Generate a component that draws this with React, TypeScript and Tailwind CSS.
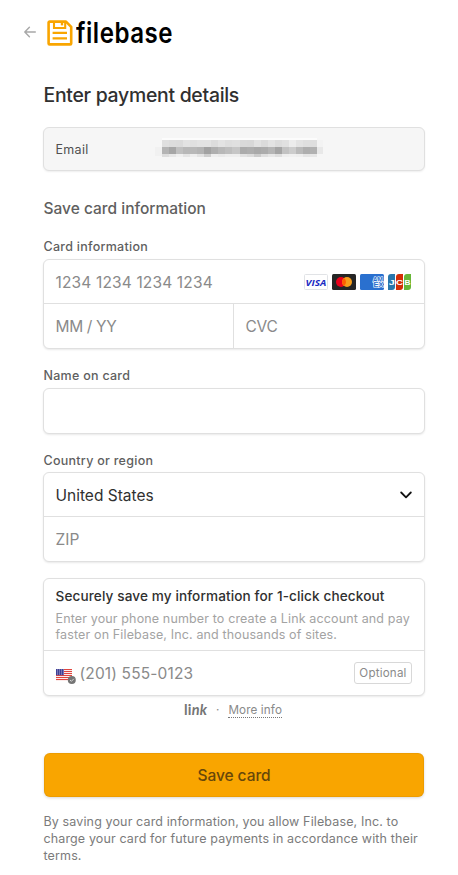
import React from "react";

const PIX_TOP = ["#dfdfdf","#dcdcdc","#dbdbdb","#e3e3e3","#e0e0e0","#e3e3e3","#e3e3e3","#dcdcdc","#e3e3e3","#dedede","#e0e0e0","#d9d9d9","#d8d8d8","#e2e2e2","#dbdbdb","#e3e3e3","#dcdcdc","#e0e0e0","#ececec","#e3e3e3","#dfdfdf","#dedede"];
const PIX_MID = ["#b4b4b4","#a6a6a6","#c0c0c0","#b8b8b8","#b8b8b8","#b4b4b4","#a2a2a2","#afafaf","#b8b8b8","#bebebe","#c6c6c6","#ababab","#aeaeae","#a9a9a9","#acacac","#b5b5b5","#a4a4a4","#c2c2c2","#cccccc","#bababa","#aeaeae","#b1b1b1"];
const PIX_LOW = ["#dddddd","#e7e7e7","#f0f0f0","#e5e5e5","#eeeeee","#e3e3e3","#cfcfcf","#eeeeee","#eaeaea","#eeeeee","#eeeeee","#e2e2e2","#dcdcdc","#cccccc","#dfdfdf","#e7e7e7","#dfdfdf","#eeeeee","#f0f0f0","#eeeeee","#e5e5e5","#e7e7e7"];

function PixelRow({ colors, className }: { colors: string[]; className: string }) {
  return (
    <div className={`flex ${className}`}>
      {colors.map((c, i) => (
        <span key={i} className="flex-1" style={{ backgroundColor: c }} />
      ))}
    </div>
  );
}

function RedactedEmail() {
  return (
    <div className="-mt-[3px] flex h-[19px] items-start">
      <div className="mt-[9px] h-[9px] w-[7px] bg-[#f1f1f1]" />
      <div className="w-[155px]">
        <div className="h-[2px] bg-[#fcfcfc]" />
        <PixelRow colors={PIX_TOP} className="h-[7px]" />
        <PixelRow colors={PIX_MID} className="h-[7px]" />
        <PixelRow colors={PIX_LOW} className="h-[3px]" />
      </div>
      <div className="mt-[2px] w-[6px]">
        <div className="h-[7px] bg-[#f3f3f3]" />
        <div className="h-[7px] bg-[#e8e8e8]" />
      </div>
    </div>
  );
}

function FilebaseMark() {
  return (
    <svg width="26" height="26" viewBox="0 0 26 26" fill="none" stroke="#f9a500">
      <path d="M2.6 1.6H19L24.2 6.8V23.4a1 1 0 0 1-1 1H2.6a1 1 0 0 1-1-1V2.6a1 1 0 0 1 1-1Z" strokeWidth="2.6" strokeLinejoin="round" />
      <path d="M7 2V8H18.2V2" strokeWidth="2.1" />
      <path d="M15 2.2V5.4" strokeWidth="2.4" />
      <path d="M5.6 12.9H20M5.6 18.4H20" strokeWidth="2.2" />
    </svg>
  );
}

function Cards() {
  return (
    <div className="flex gap-1">
      <svg width="24" height="16" viewBox="0 0 24 16">
        <rect x=".5" y=".5" width="23" height="15" rx="1" fill="#fff" stroke="#e1e3e6" />
        <text x="1.6" y="11.5" fontFamily="Open Sans" fontSize="9.6" fontWeight="700" fontStyle="italic" fill="#1a2bc3" textLength="20.6" lengthAdjust="spacingAndGlyphs">VISA</text>
      </svg>
      <svg width="24" height="16" viewBox="0 0 24 16">
        <rect width="24" height="16" rx="1.5" fill="#252525" />
        <circle cx="9" cy="8" r="5" fill="#eb001b" />
        <circle cx="15" cy="8" r="5" fill="#f79e1b" />
        <path d="M12 4a5 5 0 0 1 0 8a5 5 0 0 1 0-8" fill="#ff5f00" />
      </svg>
      <svg width="24" height="16" viewBox="0 0 24 16">
        <rect width="24" height="16" rx="1.5" fill="#2a70cf" />
        <g fontFamily="Liberation Sans" fontWeight="700" fill="#2a70cf" stroke="#fff" strokeWidth="1.2" paintOrder="stroke">
          <text x="12.8" y="7.8" fontSize="6.6" textLength="10" lengthAdjust="spacingAndGlyphs">AM</text>
          <text x="13.4" y="13.2" fontSize="6.6" textLength="10" lengthAdjust="spacingAndGlyphs">EX</text>
        </g>
      </svg>
      <svg width="24" height="16" viewBox="0 0 24 16">
        <path d="M3 0H7V13a3 3 0 0 1-3 3H0V3a3 3 0 0 1 3-3Z" fill="#2977ad" />
        <path d="M11 0H15V13a3 3 0 0 1-3 3H8V3a3 3 0 0 1 3-3Z" fill="#d42d06" />
        <path d="M19 0H23V13a3 3 0 0 1-3 3H16V3a3 3 0 0 1 3-3Z" fill="#67b637" />
        <g fontFamily="Liberation Sans" fontWeight="700" fontSize="8" fill="#fff">
          <text x=".7" y="11" textLength="6" lengthAdjust="spacingAndGlyphs">J</text>
          <text x="8" y="11" textLength="7" lengthAdjust="spacingAndGlyphs">C</text>
          <text x="16.4" y="11" textLength="6" lengthAdjust="spacingAndGlyphs">B</text>
        </g>
      </svg>
    </div>
  );
}

function Flag() {
  return (
    <svg width="20" height="16" viewBox="0 0 20 16">
      <rect width="16" height="12" fill="#fff" />
      {[0, 2, 4, 6, 8, 10].map((y) => (
        <rect key={y} y={y} width="16" height="1.1" fill="#e0463f" />
      ))}
      <rect width="8" height="6.2" fill="#3f4196" />
      {[1, 3, 5].map((y) => (
        <path key={y} d={`M1 ${y}H8`} stroke="#c9c9e6" strokeWidth=".8" strokeDasharray="1 1" />
      ))}
      <circle cx="15.8" cy="11" r="4" fill="#757575" />
      <path d="M14 11L15.4 12.3L17.8 9.8" fill="none" stroke="#d8d8d8" strokeWidth="1" />
    </svg>
  );
}

const box = "rounded-md border border-[#e0e0e0] bg-white shadow-[0_1px_2px_rgba(0,0,0,0.09)]";
const label = "pl-[0.5px] text-[12.5px] leading-4 font-medium tracking-[0.27px] text-[#5f5f5f]";
const field = "pt-[2px] text-[15.5px] leading-6";

export default function App() {
  return (
    <main className="h-[875px] w-[458px] overflow-hidden bg-white font-['Inter',sans-serif]">
      <header className="flex h-[65px] items-start pt-[19px] pl-6">
        <svg className="mt-[7px]" width="12" height="12" viewBox="0 0 12 12" fill="none" stroke="#a8a8a8" strokeWidth="1.4" strokeLinecap="round" strokeLinejoin="round">
          <path d="M11.3 6H.9M5.4 1.2L.8 6L5.4 10.8" />
        </svg>
        <div className="ml-[10.5px] pt-px">
          <FilebaseMark />
        </div>
        <span className="ml-[3.5px] origin-left scale-x-[0.86] text-[28px] leading-[29px] font-semibold tracking-[0.6px] text-black [font-variant-ligatures:none]">filebase</span>
      </header>

      <div className="ml-[43px] w-[382px]">
        <h1 className="pt-[18px] pl-[0.5px] text-[19.4px] leading-6 font-medium tracking-[-0.27px] text-[#303030]">Enter payment details</h1>

        <section className="mt-5 flex h-11 items-center rounded-md border border-[#e0e0e0] bg-[#f6f6f6] pl-[11px] shadow-[0_1px_2px_rgba(0,0,0,0.07)]">
          <span className="w-[100px] pt-[2px] pl-[0.5px] text-[12.5px] leading-4 tracking-[0.3px] text-[#505050]">Email</span>
          <RedactedEmail />
        </section>

        <h2 className="mt-7 pl-[0.5px] text-[15.5px] leading-5 font-medium text-[#606060]">Save card information</h2>

        <div className="mt-5">
          <div className={label}>Card information</div>
        </div>
        <section className={`mt-1 h-[90px] ${box}`}>
          <div className="flex h-[44px] items-center justify-between border-b border-[#e0e0e0] pr-3 pl-[11.5px]">
            <span className={`${field} tracking-[0.15px] text-[#8a8a8a]`}>1234 1234 1234 1234</span>
            <Cards />
          </div>
          <div className="flex h-[44px] items-center text-[#8a8a8a]">
            <div className="flex h-full w-[190px] items-center border-r border-[#e0e0e0] pl-[11.5px]">
              <span className={`${field} tracking-[-0.35px]`}>MM / YY</span>
            </div>
            <div className={`pl-[11.5px] tracking-[-0.2px] ${field}`}>CVC</div>
          </div>
        </section>

        <div className="mt-[19px]">
          <div className={label}>Name on card</div>
        </div>
        <section className={`mt-1 h-[46px] ${box}`} />

        <div className="mt-[19px]">
          <div className={label}>Country or region</div>
        </div>
        <section className={`mt-[3px] h-[90px] ${box}`}>
          <div className="flex h-[44px] items-center justify-between border-b border-[#e0e0e0] pr-3 pl-[11.5px] text-[#303030]">
            <span className={field}>United States</span>
            <svg width="12" height="8" viewBox="0 0 12 8" fill="none" stroke="#111" strokeWidth="1.8" strokeLinecap="round" strokeLinejoin="round">
              <path d="M1.2 1.5L6 6.3L10.8 1.5" />
            </svg>
          </div>
          <div className={`flex h-[44px] items-center pl-[11.5px] text-[#8a8a8a] ${field}`}>ZIP</div>
        </section>

        <section className={`mt-4 h-[118px] ${box}`}>
          <div className="h-[72px] border-b border-[#e0e0e0] pt-2 pl-[11.5px]">
            <div className="text-[13.6px] leading-[18px] font-medium tracking-[0.11px] text-[#303030]">Securely save my information for 1-click checkout</div>
            <p className="mt-[6px] text-[12.5px] leading-4 tracking-[0.14px] whitespace-nowrap text-[#a3a3a3]">
              Enter your phone number to create a Link account and pay
              <br />
              faster on Filebase, Inc. and thousands of sites.
            </p>
          </div>
          <div className="flex h-[44px] items-center pr-3 pl-3">
            <div className="mt-2">
              <Flag />
            </div>
            <span className={`ml-[3.5px] flex-1 tracking-[0.15px] text-[#8a8a8a] ${field}`}>(201) 555-0123</span>
            <span className="flex h-[22px] w-[58px] items-center justify-center rounded-[3px] border border-[#d8d8d8] pt-px text-[11.6px] tracking-[0.2px] text-[#8a8a8a]">Optional</span>
          </div>
        </section>

        <div className="mt-[6px] flex h-4 items-center pl-[141px] text-[11.7px] text-[#8a8a8a]">
          <span className="w-[24px] font-['Lato',sans-serif] text-[14.5px] leading-4 font-bold tracking-[0.2px] text-[#757575]">
            li<i>nk</i>
          </span>
          <span className="ml-2 pt-[2px]">·</span>
          <span className="ml-[9px] border-b border-dotted border-[#777] pt-px leading-[13px] tracking-[0.12px]">More info</span>
        </div>

        <button className="mx-px mt-[35px] flex h-11 w-[380px] items-center justify-center rounded-md bg-[#f9a500] pt-[2px] text-[15.5px] font-medium tracking-[-0.05px] text-[#67470a] shadow-[0_1px_3px_rgba(0,0,0,0.16),inset_0_0_0_1px_rgba(190,120,0,0.2)]">Save card</button>

        <p className="mt-4 pl-[0.5px] text-[12.5px] leading-[17px] tracking-[0.13px] whitespace-nowrap text-[#7b7b7b]">
          By saving your card information, you allow Filebase, Inc. to
          <br />
          charge your card for future payments in accordance with their
          <br />
          terms.
        </p>
      </div>
    </main>
  );
}
